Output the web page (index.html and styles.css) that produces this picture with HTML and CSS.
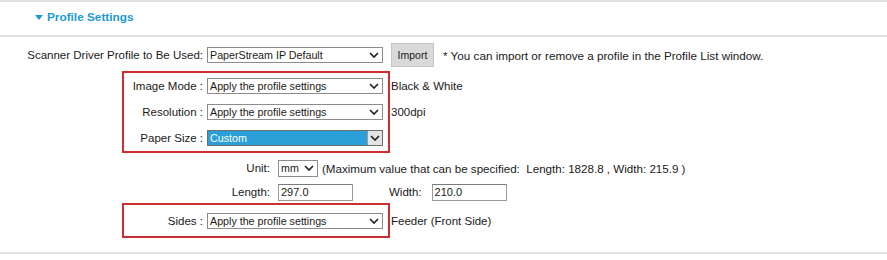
FILE: index.html
```html
<!DOCTYPE html>
<html>

<head>
  <title>Profile Settings</title>
  <link rel="stylesheet" href="styles.css">
</head>

<body>
  <div class="panel">
    <div class="panel-head"><span class="caret"></span>Profile Settings</div>
    <div class="panel-body">
      <div class="row row-profile">
        <label class="lbl">Scanner Driver Profile to Be Used:</label>
        <span class="sel sel-wide">
          <select><option>PaperStream IP Default</option></select>
          <svg class="chev" width="10" height="6" viewBox="0 0 10 6"><polyline points="1,1 5,5 9,1" /></svg>
        </span>
        <button class="btn">Import</button>
        <span class="note">* You can import or remove a profile in the Profile List window.</span>
      </div>

      <div class="mark mark-top">
        <div class="row row-boxed">
          <label class="lbl">Image Mode :</label>
          <span class="sel sel-wide">
            <select><option>Apply the profile settings</option></select>
            <svg class="chev" width="10" height="6" viewBox="0 0 10 6"><polyline points="1,1 5,5 9,1" /></svg>
          </span>
          <span class="val">Black &amp; White</span>
        </div>
        <div class="row row-boxed">
          <label class="lbl">Resolution :</label>
          <span class="sel sel-wide">
            <select><option>Apply the profile settings</option></select>
            <svg class="chev" width="10" height="6" viewBox="0 0 10 6"><polyline points="1,1 5,5 9,1" /></svg>
          </span>
          <span class="val">300dpi</span>
        </div>
        <div class="row row-boxed">
          <label class="lbl">Paper Size :</label>
          <span class="sel sel-wide sel-active">
            <select><option>Custom</option></select>
            <span class="drop-btn"></span>
            <svg class="chev" width="10" height="6" viewBox="0 0 10 6"><polyline points="1,1 5,5 9,1" /></svg>
          </span>
        </div>
      </div>

      <div class="row row-unit">
        <label class="lbl lbl-sub">Unit:</label>
        <span class="sel sel-unit">
          <select><option>mm</option></select>
          <svg class="chev" width="10" height="6" viewBox="0 0 10 6"><polyline points="1,1 5,5 9,1" /></svg>
        </span>
        <span class="hint">(Maximum value that can be specified:&nbsp; Length: 1828.8 , Width: 215.9 )</span>
      </div>
      <div class="row row-size">
        <label class="lbl lbl-sub">Length:</label>
        <input class="num" type="text" value="297.0">
        <label class="lbl-width">Width:</label>
        <input class="num" type="text" value="210.0">
      </div>

      <div class="mark mark-bottom">
        <div class="row row-boxed row-sides">
          <label class="lbl">Sides :</label>
          <span class="sel sel-wide">
            <select><option>Apply the profile settings</option></select>
            <svg class="chev" width="10" height="6" viewBox="0 0 10 6"><polyline points="1,1 5,5 9,1" /></svg>
          </span>
          <span class="val">Feeder (Front Side)</span>
        </div>
      </div>
    </div>
  </div>
</body>

</html>
```

FILE: styles.css
```css
body {
  margin: 0;
  background: #ffffff;
  font-family: "Liberation Sans", Arial, sans-serif;
  font-size: 11.5px;
  color: #1a1a1a;
}

.panel {
  border-top: 2px solid #e1e1e1;
  border-bottom: 2px solid #e1e1e1;
  padding-bottom: 14px;
}

.panel-head {
  display: flex;
  align-items: center;
  height: 14px;
  line-height: 14px;
  padding: 8px 0 11px 35px;
  border-bottom: 2px solid #e1e1e1;
  color: #1b9ad6;
  font-size: 11.8px;
  font-weight: bold;
}

.caret {
  width: 0;
  height: 0;
  border-left: 4px solid transparent;
  border-right: 4px solid transparent;
  border-top: 5px solid #1b9ad6;
  margin-right: 4px;
}

.panel-body {
  padding-top: 6px;
}

.row {
  display: flex;
  align-items: center;
  white-space: nowrap;
}

.row-profile {
  height: 24px;
}

.lbl {
  flex: none;
  width: 203px;
  text-align: right;
  margin-right: 4px;
}

.lbl-sub {
  width: 270px;
  margin-right: 8px;
}

.mark {
  width: 268px;
  box-sizing: border-box;
  margin-left: 122px;
  border: 2px solid #cc2f2f;
}

.mark-top {
  margin-top: 4px;
}

.mark .row {
  height: 26px;
}

.mark .lbl {
  width: 79px;
}

.mark .row-sides {
  height: 31px;
}

.sel {
  position: relative;
  flex: none;
  display: inline-block;
}

.sel select {
  appearance: none;
  -webkit-appearance: none;
  display: block;
  box-sizing: border-box;
  height: 16px;
  margin: 0;
  padding: 0 0 0 2px;
  border: 1px solid #8c8c8c;
  border-radius: 0;
  background: #ffffff;
  font-family: inherit;
  font-size: 10.7px;
  line-height: 14px;
  color: #1a1a1a;
}

.sel-wide select {
  width: 176px;
}

.sel-unit select {
  width: 40px;
  height: 17px;
}

.chev {
  position: absolute;
  right: 4px;
  top: 50%;
  margin-top: -3px;
  fill: none;
  stroke: #222222;
  stroke-width: 1.7;
}

.sel-active select {
  background: #2a9fd8;
  color: #ffffff;
  border-color: #6d6d6d;
}

.drop-btn {
  position: absolute;
  right: 1px;
  top: 1px;
  bottom: 1px;
  width: 14px;
  background: #e4e4e4;
  border-left: 1px solid #9a9a9a;
}

.sel-active .chev {
  right: 3px;
}

.val {
  margin-left: 8px;
}

.btn {
  flex: none;
  box-sizing: border-box;
  width: 43px;
  height: 24px;
  margin: 0 0 0 8px;
  padding: 0;
  background: #d9d9d9;
  border: 1px solid #c4c4c4;
  border-radius: 0;
  font-family: inherit;
  font-size: 10.5px;
  color: #222222;
}

.note {
  margin-left: 9px;
  font-size: 11.7px;
}

.row-unit {
  margin-top: 2px;
  height: 26px;
}

.hint {
  margin-left: 4px;
  font-size: 11.6px;
}

.row-size {
  height: 22px;
}

.num {
  flex: none;
  box-sizing: border-box;
  width: 75px;
  height: 17px;
  margin: 0;
  padding: 0 2px;
  border: 1px solid #9a9a9a;
  border-top-color: #7a7a7a;
  font-family: inherit;
  font-size: 11px;
  color: #1a1a1a;
}

.lbl-width {
  margin: 0 10px 0 36px;
}
```
